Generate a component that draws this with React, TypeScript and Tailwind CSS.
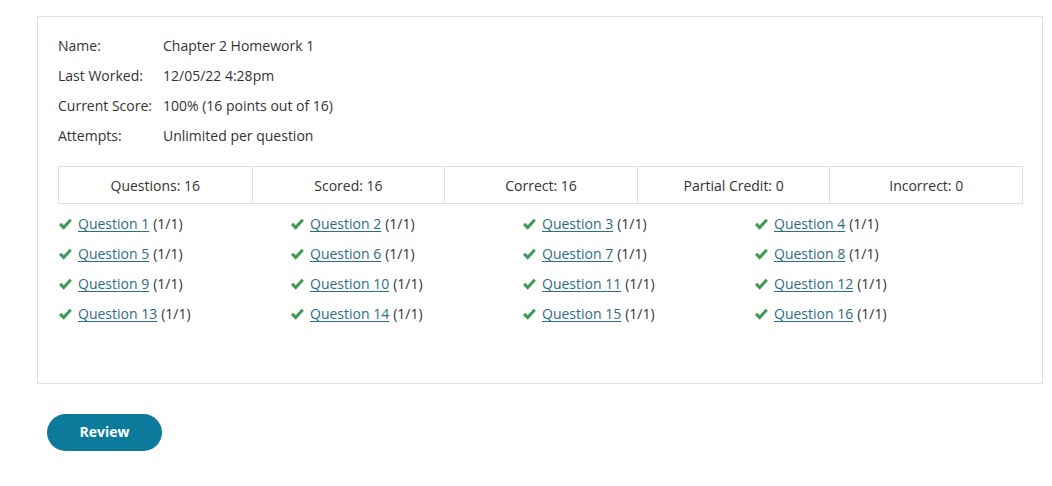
import { Fragment } from "react";

const info = [
	["Name:", "Chapter 2 Homework 1"],
	["Last Worked:", "12/05/22 4:28pm"],
	["Current Score:", "100% (16 points out of 16)"],
	["Attempts:", "Unlimited per question"],
];

const stats = [
	"Questions: 16",
	"Scored: 16",
	"Correct: 16",
	"Partial Credit: 0",
	"Incorrect: 0",
];

function Check() {
	return (
		<svg viewBox="0 0 16 16" className="mr-[5px] h-[15px] w-[15px] shrink-0" aria-hidden="true">
			<path d="M1 8.4 L3.4 6.1 L6.1 8.8 L12.4 1.8 L14.8 4.1 L6.1 13.6 Z" fill="#3f9a55" />
		</svg>
	);
}

export default function App() {
	return (
		<div
			className="min-h-[486px] bg-white text-[14px] text-[#333]"
			style={{ fontFamily: '"Open Sans", "Liberation Sans", sans-serif' }}
		>
			<div className="pl-[37px] pr-[9px] pt-[16px]">
				<div className="h-[368px] border border-[#dedede] pl-[20px] pr-[19px] pt-[19px]">
					<div className="grid grid-cols-[105px_1fr] gap-y-[10px] leading-[20px]">
						{info.map(([k, v]) => (
							<Fragment key={k}>
								<div>{k}</div>
								<div>{v}</div>
							</Fragment>
						))}
					</div>

					<div className="mt-[20px] grid h-[38px] grid-cols-5 border border-[#dedede]">
						{stats.map((s, i) => (
							<div
								key={s}
								className={`flex items-center justify-center ${i > 0 ? "border-l border-[#dedede]" : ""}`}
							>
								{s}
							</div>
						))}
					</div>

					<div className="mt-[10px] grid grid-cols-[232px_232px_232px_232px] gap-y-[10px] leading-[20px]">
						{Array.from({ length: 16 }, (_, i) => (
							<div key={i} className="flex items-center">
								<Check />
								<a href="#" className="text-[#2b6d83] underline underline-offset-[2px]">
									Question {i + 1}
								</a>
								<span className="ml-[4px]">(1/1)</span>
							</div>
						))}
					</div>
				</div>
			</div>

			<div className="pl-[47px] pt-[30px]">
				<button
					type="button"
					className="h-[37px] w-[115px] rounded-full bg-[#0b7a9b] pb-[3px] text-[14px] font-bold text-white"
				>
					Review
				</button>
			</div>
		</div>
	);
}
